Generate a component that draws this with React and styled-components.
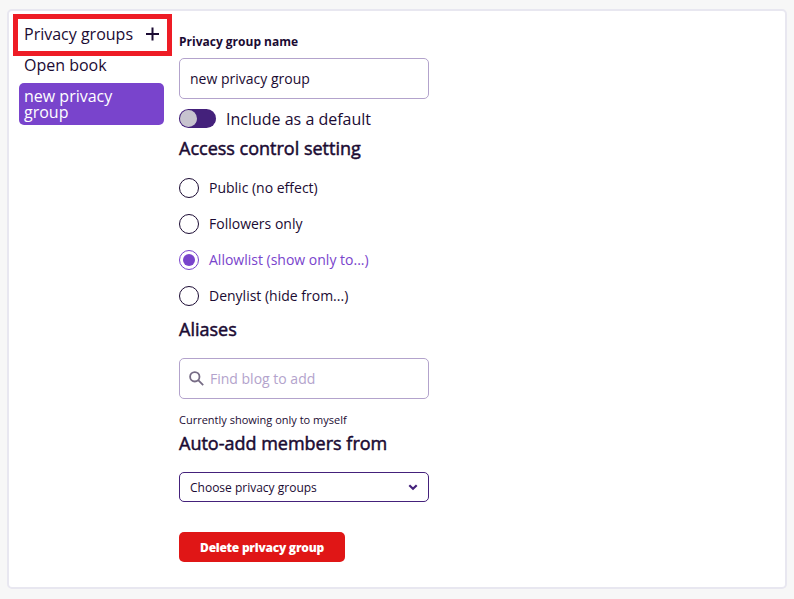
import React, { useState } from "react";
import styled, { createGlobalStyle } from "styled-components";

const GlobalStyle = createGlobalStyle`
  *, *::before, *::after { box-sizing: border-box; }
  body {
    margin: 0;
    background: #f7f7f7;
    color: #1b0b33;
    font-family: "Open Sans", "Noto Sans", sans-serif;
  }
  button, input { font: inherit; color: inherit; }
`;

const Page = styled.main`
  height: 599px;
  padding: 9px 7px 10px;
  overflow: hidden;
`;

const Panel = styled.section`
  position: relative;
  display: flex;
  gap: 15px;
  height: 580px;
  padding: 11px 10px 0;
  background: #fff;
  border: 2px solid #e8e7f0;
  border-radius: 5px;
`;

const Highlight = styled.div`
  position: absolute;
  left: 4px;
  top: 3px;
  width: 159px;
  height: 42px;
  border: 5px solid #ee1c25;
  pointer-events: none;
`;

const Sidebar = styled.nav`
  width: 145px;
  flex: none;
  font-size: 16px;
  line-height: 16px;
`;

const SidebarHeader = styled.div`
  display: flex;
  align-items: center;
  justify-content: space-between;
  height: 24px;
  padding: 0 4px 0 5px;
`;

const IconButton = styled.button`
  display: flex;
  padding: 0;
  border: 0;
  background: none;
`;

const GroupItem = styled.button`
  display: block;
  width: 100%;
  height: ${(p) => (p.$active ? 42 : 37)}px;
  padding: ${(p) => (p.$active ? "5px 40px 5px 5px" : "11px 5px 10px")};
  border: 0;
  border-radius: 5px;
  background: ${(p) => (p.$active ? "#7944cc" : "transparent")};
  color: ${(p) => (p.$active ? "#fff" : "inherit")};
  text-align: left;
`;

const Form = styled.form`
  display: flex;
  flex-direction: column;
  align-items: flex-start;
  width: 250px;
  padding-top: 10px;
`;

const Label = styled.label`
  height: 26px;
  font-size: 12px;
  font-weight: 700;
  line-height: 20px;
`;

const Field = styled.div`
  display: flex;
  align-items: center;
  gap: 6px;
  width: 250px;
  height: 41px;
  margin-top: ${(p) => (p.$search ? 16 : 0)}px;
  padding: 0 10px 0 ${(p) => (p.$search ? 9 : 10)}px;
  border: 1px solid #b3a3cc;
  border-radius: 5px;
  background: #fff;
`;

const Input = styled.input`
  flex: 1;
  min-width: 0;
  padding: 0;
  border: 0;
  outline: 0;
  background: transparent;
  font-size: 14px;
  line-height: 20px;
  &::placeholder { color: #b3a3cc; opacity: 1; }
`;

const ToggleRow = styled.label`
  display: flex;
  align-items: center;
  gap: 10px;
  height: 19px;
  margin-top: 10px;
  font-size: 16px;
  line-height: 19px;
`;

const ToggleText = styled.span`
  padding-top: 2px;
`;

const Switch = styled.button`
  display: flex;
  justify-content: ${(p) => (p.$on ? "flex-end" : "flex-start")};
  width: 37px;
  height: 19px;
  padding: 1px;
  border: 0;
  border-radius: 10px;
  background: #44217b;
  &::before {
    content: "";
    width: 17px;
    height: 17px;
    border-radius: 50%;
    background: #c7c3cf;
  }
`;

const Heading = styled.h2`
  height: 26px;
  margin: ${(p) => p.$top}px 0 0;
  font-size: 18px;
  font-weight: 400;
  line-height: 26px;
  -webkit-text-stroke: 0.5px currentColor;
`;

const RadioList = styled.div`
  display: grid;
  gap: 16px;
  margin-top: 17px;
`;

const RadioRow = styled.label`
  display: flex;
  align-items: center;
  gap: 10px;
  height: 20px;
  font-size: 14px;
  line-height: 20px;
  color: ${(p) => (p.$checked ? "#7944cc" : "inherit")};
`;

const Radio = styled.input.attrs({ type: "radio" })`
  appearance: none;
  width: 20px;
  height: 20px;
  margin: 0;
  border: 1px solid #1b0b33;
  border-radius: 50%;
  &:checked {
    padding: 3px;
    border-color: #7944cc;
    background: #7944cc content-box;
  }
`;

const Note = styled.p`
  height: 16px;
  margin: 13px 0 0;
  font-size: 11px;
  line-height: 16px;
`;

const Select = styled.button`
  display: flex;
  align-items: center;
  justify-content: space-between;
  width: 250px;
  height: 30px;
  margin-top: 16px;
  padding: 0 10px;
  border: 1px solid #44217b;
  border-radius: 5px;
  background: #fff;
  font-size: 12px;
`;

const DeleteButton = styled.button`
  width: 166px;
  height: 30px;
  margin-top: 30px;
  padding: 0;
  border: 0;
  border-radius: 5px;
  background: #e01616;
  color: #fff;
  font-size: 12px;
  font-weight: 800;
  letter-spacing: -0.25px;
`;

const PlusIcon = () => (
  <svg width="15" height="14" viewBox="0 0 15 14" fill="none" stroke="#1b0b33" strokeWidth="2">
    <path d="M7.5 .5v13M1 7h13" />
  </svg>
);

const SearchIcon = () => (
  <svg width="15" height="15" viewBox="0 0 15 15" fill="none" stroke="#766b85" strokeWidth="1.8">
    <circle cx="5.8" cy="5.8" r="4.7" />
    <path d="M9.2 9.2l5 5" />
  </svg>
);

const ChevronIcon = () => (
  <svg width="10" height="7" viewBox="0 0 10 7" fill="none" stroke="#44217b" strokeWidth="2.2">
    <path d="M1.3 1.2L5 4.7l3.7-3.5" />
  </svg>
);

const accessOptions = [
  "Public (no effect)",
  "Followers only",
  "Allowlist (show only to...)",
  "Denylist (hide from...)",
];

const groups = ["Open book", "new privacy group"];

export default function App() {
  const [name, setName] = useState("new privacy group");
  const [isDefault, setIsDefault] = useState(false);
  const [access, setAccess] = useState(2);

  return (
    <>
      <GlobalStyle />
      <Page>
        <Panel>
          <Sidebar>
            <SidebarHeader>
              <span>Privacy groups</span>
              <IconButton aria-label="Add privacy group"><PlusIcon /></IconButton>
            </SidebarHeader>
            {groups.map((group, i) => (
              <GroupItem key={group} $active={i === 1}>{group}</GroupItem>
            ))}
          </Sidebar>
          <Form onSubmit={(e) => e.preventDefault()}>
            <Label htmlFor="group-name">Privacy group name</Label>
            <Field>
              <Input id="group-name" value={name} onChange={(e) => setName(e.target.value)} />
            </Field>
            <ToggleRow>
              <Switch
                type="button"
                role="switch"
                aria-checked={isDefault}
                $on={isDefault}
                onClick={() => setIsDefault(!isDefault)}
              />
              <ToggleText>Include as a default</ToggleText>
            </ToggleRow>
            <Heading $top={7}>Access control setting</Heading>
            <RadioList>
              {accessOptions.map((option, i) => (
                <RadioRow key={option} $checked={access === i}>
                  <Radio name="access" checked={access === i} onChange={() => setAccess(i)} />
                  {option}
                </RadioRow>
              ))}
            </RadioList>
            <Heading $top={10}>Aliases</Heading>
            <Field $search>
              <SearchIcon />
              <Input placeholder="Find blog to add" aria-label="Find blog to add" />
            </Field>
            <Note>Currently showing only to myself</Note>
            <Heading $top={2}>Auto-add members from</Heading>
            <Select type="button">
              Choose privacy groups
              <ChevronIcon />
            </Select>
            <DeleteButton type="button">Delete privacy group</DeleteButton>
          </Form>
          <Highlight />
        </Panel>
      </Page>
    </>
  );
}
